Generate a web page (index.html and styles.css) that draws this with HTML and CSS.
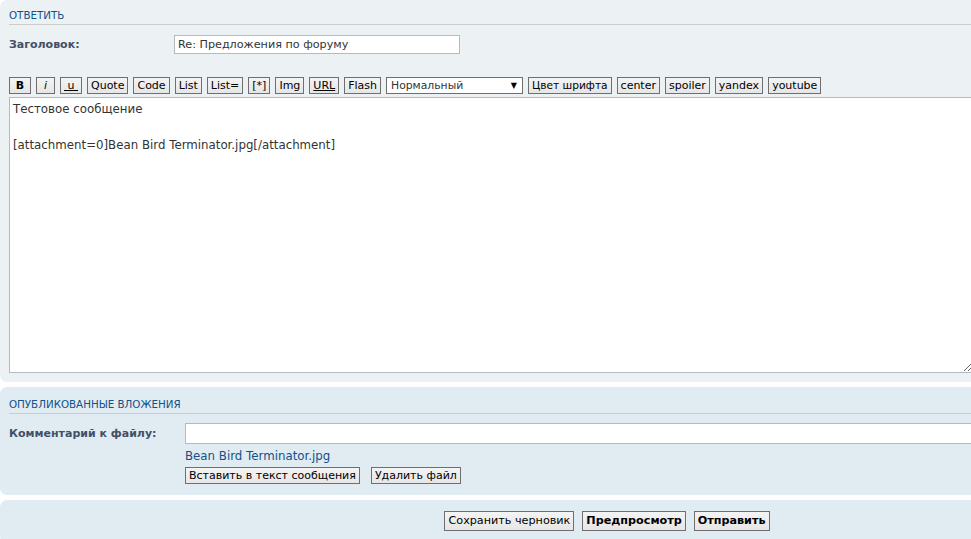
FILE: index.html
```html
<!DOCTYPE html>
<html lang="ru">
<head>
<meta charset="utf-8">
<title>Ответить</title>
<link rel="stylesheet" href="styles.css">
</head>
<body>
<div class="page">
  <div class="panel panel-reply">
    <h3 class="panel-title">Ответить</h3>
    <div class="field field-subject">
      <label class="field-label">Заголовок:</label>
      <input class="inputbox subject-input" type="text" value="Re: Предложения по форуму">
    </div>
    <div class="toolbar">
      <span class="btn btn-b">B</span>
      <span class="btn btn-i">i</span>
      <span class="btn btn-u">&nbsp;u&nbsp;</span>
      <span class="btn">Quote</span>
      <span class="btn">Code</span>
      <span class="btn">List</span>
      <span class="btn">List=</span>
      <span class="btn">[*]</span>
      <span class="btn">Img</span>
      <span class="btn btn-url">URL</span>
      <span class="btn">Flash</span>
      <span class="fake-select">Нормальный<span class="arrow">▼</span></span>
      <span class="btn btn-cyr">Цвет шрифта</span>
      <span class="btn">center</span>
      <span class="btn">spoiler</span>
      <span class="btn">yandex</span>
      <span class="btn">youtube</span>
    </div>
    <textarea class="message">Тестовое сообщение

[attachment=0]Bean Bird Terminator.jpg[/attachment]</textarea>
  </div>

  <div class="panel panel-attach">
    <h3 class="panel-title">Опубликованные вложения</h3>
    <div class="field field-comment">
      <label class="field-label label-wide">Комментарий к файлу:</label>
      <input class="inputbox comment-input" type="text" value="">
    </div>
    <div class="attach-info">
      <a class="file-link" href="#">Bean Bird Terminator.jpg</a>
      <div class="attach-actions">
        <span class="btn btn-mid">Вставить в текст сообщения</span>
        <span class="btn btn-mid">Удалить файл</span>
      </div>
    </div>
  </div>

  <div class="panel panel-submit">
    <div class="submit-buttons">
      <span class="btn btn-big">Сохранить черновик</span>
      <span class="btn btn-big btn-strong">Предпросмотр</span>
      <span class="btn btn-big btn-strong">Отправить</span>
    </div>
  </div>
</div>
</body>
</html>
```
FILE: styles.css
```css
html, body {
  margin: 0;
  padding: 0;
  background: #ffffff;
  overflow: hidden;
}

body {
  font-family: "DejaVu Sans", Verdana, sans-serif;
  font-size: 11px;
  color: #333333;
}

.page {
  width: 1214px;
}

.panel {
  border-radius: 7px;
  padding: 0 9px;
  margin-bottom: 5px;
}

.panel-reply {
  background: #ECF1F3;
  padding-bottom: 9px;
}

.panel-attach {
  background: #E1EBF2;
  padding-bottom: 11px;
}

.panel-submit {
  background: #E1EBF2;
  padding-top: 11px;
  padding-bottom: 12px;
}

.panel-title {
  margin: 0;
  padding: 9px 0 2px;
  font-size: 10.3px;
  line-height: 13px;
  font-weight: normal;
  text-transform: uppercase;
  color: #105289;
  border-bottom: 1px solid #CCCCCC;
}

.panel-attach .panel-title {
  padding-top: 11px;
}

.field {
  display: flex;
  align-items: center;
}

.field-subject {
  margin-top: 10px;
}

.field-comment {
  margin-top: 9px;
}

.field-label {
  width: 165px;
  flex: none;
  font-weight: bold;
  font-size: 11px;
  color: #425067;
}

.label-wide {
  width: 176px;
}

.inputbox {
  box-sizing: border-box;
  border: 1px solid #B4BAC0;
  background: #ffffff;
  font-family: "DejaVu Sans", Verdana, sans-serif;
  font-size: 11.2px;
  color: #333333;
  padding: 0 3px;
  margin: 0;
  outline: none;
}

.subject-input {
  width: 286px;
  height: 19px;
}

.comment-input {
  width: 900px;
  height: 21px;
}

.toolbar {
  display: flex;
  gap: 5px;
  margin-top: 23px;
  height: 17px;
}

.btn {
  box-sizing: border-box;
  display: inline-block;
  height: 17px;
  line-height: 15px;
  padding: 0 3px;
  border: 1px solid #6f6f6f;
  background: linear-gradient(#f4f4f4, #e6e6e6);
  font-family: "DejaVu Sans", Verdana, sans-serif;
  font-size: 11px;
  color: #000000;
  white-space: nowrap;
  text-align: center;
}

.toolbar .btn-cyr {
  font-size: 10.6px;
}

.btn-b {
  width: 22px;
  font-weight: bold;
}

.btn-i {
  width: 19px;
  font-style: italic;
}

.btn-u {
  width: 22px;
  text-decoration: underline;
}

.btn-url {
  text-decoration: underline;
}

.fake-select {
  box-sizing: border-box;
  display: inline-flex;
  justify-content: space-between;
  align-items: center;
  width: 137px;
  height: 17px;
  padding: 0 5px 0 4px;
  border: 1px solid #6f6f6f;
  background: #ffffff;
  color: #333333;
  font-size: 10.8px;
}

.fake-select .arrow {
  font-size: 8px;
  color: #000;
}

.message {
  display: block;
  box-sizing: border-box;
  width: 964px;
  height: 276px;
  margin: 3px 0 0;
  padding: 2px 3px;
  border: 1px solid #B4BAC0;
  background: #ffffff;
  font-family: "DejaVu Sans", Verdana, sans-serif;
  font-size: 11.8px;
  line-height: 18px;
  color: #333333;
  outline: none;
}

.attach-info {
  margin-left: 176px;
}

.file-link {
  display: block;
  margin-top: 5px;
  line-height: 14px;
  font-size: 11.8px;
  color: #105289;
  text-decoration: none;
}

.attach-actions {
  display: flex;
  gap: 11px;
  margin-top: 4px;
}

.btn-mid {
  height: 17px;
  line-height: 15px;
}

.submit-buttons {
  display: flex;
  justify-content: center;
  gap: 8px;
}

.btn-big {
  height: 20px;
  line-height: 18px;
  font-size: 11.2px;
  padding: 0 3px;
}

.btn-strong {
  font-weight: bold;
}
```
